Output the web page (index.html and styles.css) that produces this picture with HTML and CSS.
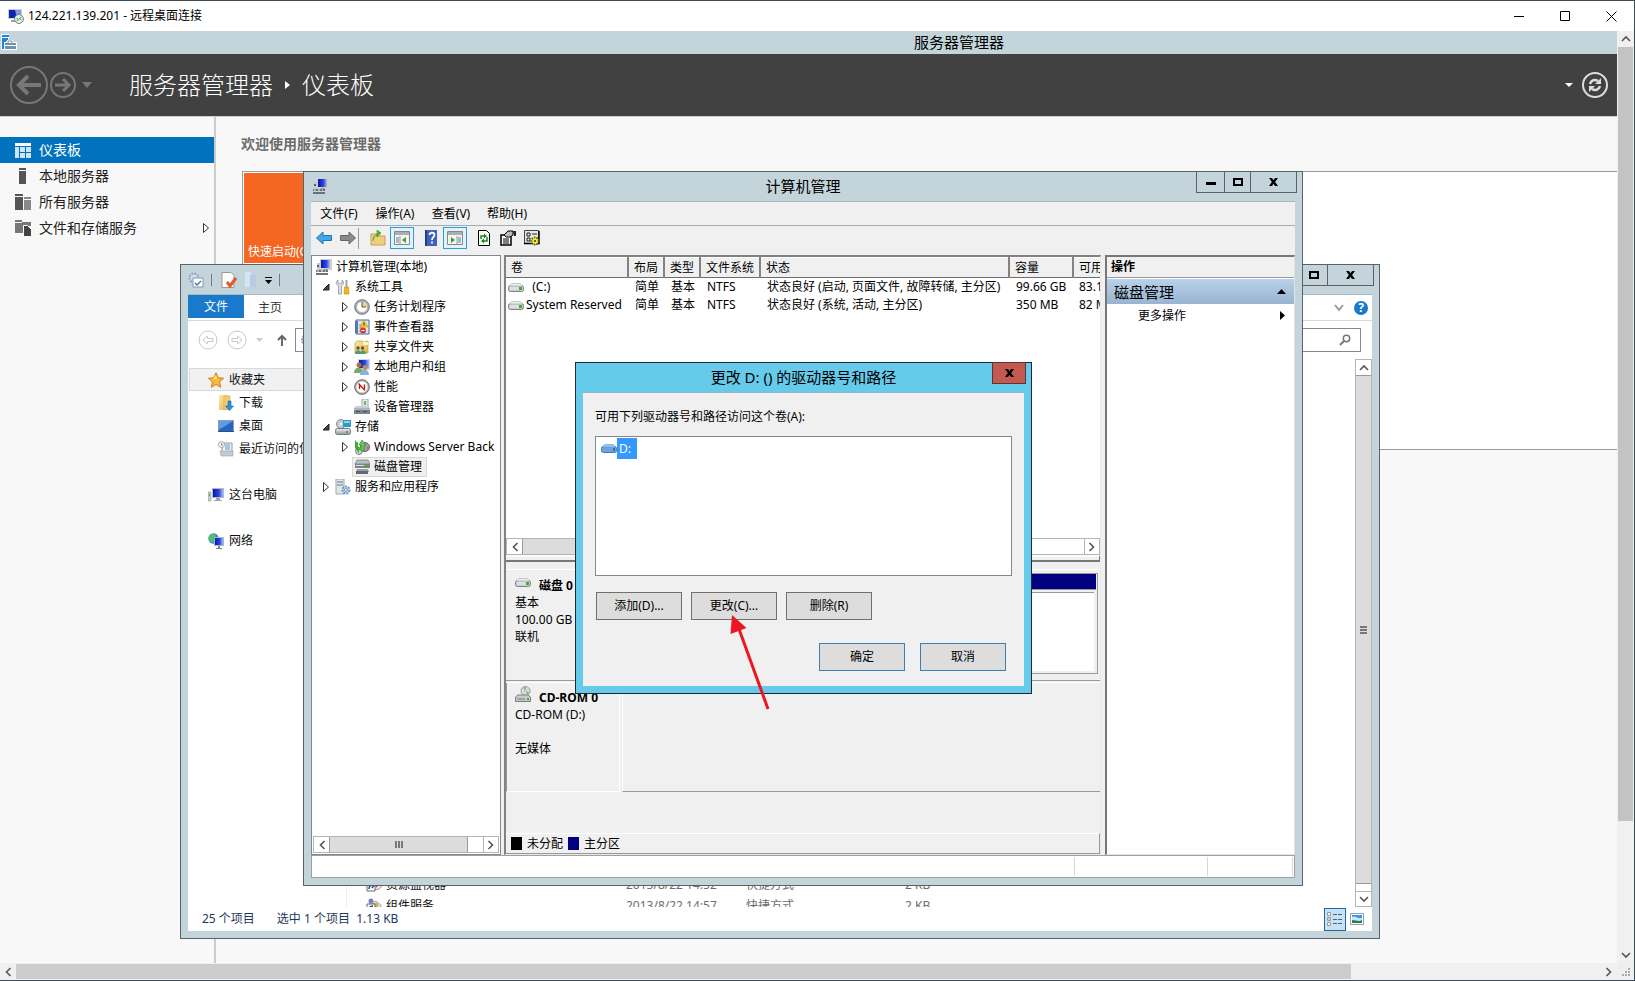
FILE: index.html
```html
<!DOCTYPE html>
<html lang="zh-CN">
<head>
<meta charset="utf-8">
<title>124.221.139.201 - 远程桌面连接</title>
<link rel="stylesheet" href="styles.css">
</head>
<body>
<svg class="defs" aria-hidden="true">
  <defs>
    <linearGradient id="g-screen" x1="0" y1="0" x2="1" y2="0"><stop offset="0" stop-color="#0a16a8"/><stop offset=".6" stop-color="#2b49dd"/><stop offset="1" stop-color="#a9bdf5"/></linearGradient>
    <linearGradient id="g-steel" x1="0" y1="0" x2="0" y2="1"><stop offset="0" stop-color="#f2f3f5"/><stop offset="1" stop-color="#8d939b"/></linearGradient>
    <linearGradient id="g-fold" x1="0" y1="0" x2="1" y2="1"><stop offset="0" stop-color="#fbe9a6"/><stop offset="1" stop-color="#e0b64a"/></linearGradient>
    <symbol id="i-comp" viewBox="0 0 16 16"><path d="M4 0h12v11H4z" fill="#d0cfc8"/><path d="M5 1h9v8H5z" fill="url(#g-screen)"/><path d="M8 10h4v2H8z" fill="#999"/><path d="M1 4h3v7H1z" fill="#c3c8cf"/><path d="M1 6h2v2H1z" fill="#5a636d"/><path d="M0 11h12v2H0zM0 14h12v2H0z" fill="#69737b"/><path d="M1 11h2v2H1zM5 11h2v2H5zM9 11h1v2H9z" fill="#aeb6bc"/></symbol>
    <symbol id="i-rdp" viewBox="0 0 16 16"><path d="M0 1h14v10H0z" fill="#c9d2da"/><path d="M1 2h12v8H1z" fill="#0a25b0"/><path d="M7 2h6v8H9z" fill="#7e9be8"/><path d="M3 12h7v2H3z" fill="#9aa4ad"/><circle cx="11" cy="11" r="4.500" fill="#e8efe8" stroke="#7b847e"/><path d="M8.500 10l2 1.500-2 1.500M13.500 9l-2 1.500 2 1.500" fill="none" stroke="#2f9a2f"/></symbol>
    <symbol id="i-srv" viewBox="0 0 16 16"><path d="M0 0h8v5H6v11H0z" fill="#fff"/><path d="M1 1h7v2H1zM1 4h6v3H5v8H1z" fill="#1c86d4"/><path d="M3 8h3V6h6v2h4v8H3z" fill="#fff"/><path d="M4 9h11v2H4zM4 12h11v3H4z" fill="#7391a5"/><path d="M7 9V7h4v2" fill="none" stroke="#7391a5"/></symbol>
    <symbol id="i-tools" viewBox="0 0 16 16"><path d="M3 1v3l2 1 2-1V1c3 2 1 5-.5 6v8h-3V7C1.500 6 0 3 3 1z" fill="#dde1e3" stroke="#8b9194" stroke-width=".8"/><path d="M10.500 1h2v7h-2z" fill="#9ea3a6"/><path d="M9.500 8h4l.5 7h-5z" fill="#f4b51d" stroke="#c38a08" stroke-width=".6"/></symbol>
    <symbol id="i-clock" viewBox="0 0 16 16"><circle cx="8" cy="8" r="7.300" fill="#b3b5b8" stroke="#707377"/><circle cx="8" cy="8" r="5.500" fill="#fff" stroke="#999" stroke-width=".6"/><path d="M8 8V3a5 5 0 0 1 5 5z" fill="#f6cf80"/><path d="M8 3v5h4" fill="none" stroke="#555"/></symbol>
    <symbol id="i-event" viewBox="0 0 16 16"><path d="M2 1h13v14H2z" fill="#dbe5f4" stroke="#4d6797"/><path d="M1 2h3v12H1z" fill="#5876a9"/><path d="M5 6h4M5 9h3M5 12h3" stroke="#7189b5"/><path d="M10 1l4 7H6z" fill="#f7d11c" stroke="#b38d00" stroke-width=".5"/><path d="M10 3.500v3" stroke="#333"/><circle cx="9" cy="11.500" r="3" fill="#d83a32"/><path d="M7.500 11.500h3" stroke="#fff"/></symbol>
    <symbol id="i-share" viewBox="0 0 16 16"><path d="M1 4l2-2h5l2 1 4-1v12H1z" fill="url(#g-fold)" stroke="#c59b3b" stroke-width=".7"/><path d="M9 3h5v3H9z" fill="#fff3cf"/><circle cx="4" cy="9" r="1.700" fill="#6b513b"/><circle cx="8.500" cy="9" r="1.700" fill="#6b513b"/><path d="M1 15c0-5 6-5 6 0z" fill="#4c9c7b"/><path d="M6 15c0-5 6-5 6 0z" fill="#4da06a"/></symbol>
    <symbol id="i-users" viewBox="0 0 16 16"><path d="M4 0h12v11H4z" fill="#d2d6dd"/><path d="M5 1h10v8H5z" fill="url(#g-screen)"/><circle cx="5" cy="6" r="2.500" fill="#a9703c"/><circle cx="11" cy="8.500" r="2.500" fill="#c08a5a"/><path d="M0 14c0-7 9-7 9 0z" fill="#7ba96d"/><path d="M6 16c0-7 9-7 9 0z" fill="#8cb1dd"/></symbol>
    <symbol id="i-perf" viewBox="0 0 16 16"><circle cx="8" cy="8" r="7.300" fill="#b5b5b5" stroke="#666"/><circle cx="8" cy="8" r="5.600" fill="#fff"/><path d="M5.500 10V5.500M10.500 10V5.500M4.500 4.500l6.500 7" stroke="#d01818" stroke-width="1.400" fill="none"/></symbol>
    <symbol id="i-dev" viewBox="0 0 16 16"><path d="M8 0h6v8H8z" fill="#e5e8eb" stroke="#9aa"/><path d="M10 2h2v4h-2z" fill="#75b34c"/><path d="M2 7h12l2 2H0z" fill="#c9ced3"/><path d="M0 9h16v6H0z" fill="#7b838b"/><path d="M0 9h16v2H0z" fill="#aeb5bb"/><path d="M2 12h4v1H2zM9 12h4v1H9z" fill="#4a5157"/></symbol>
    <symbol id="i-stor" viewBox="0 0 16 16"><circle cx="6" cy="5" r="4.500" fill="#c4ccd0" stroke="#889095"/><circle cx="6" cy="5" r="1.300" fill="#fff"/><path d="M8 1h8v7H8z" fill="#2f9cc7"/><path d="M9 2h6v2H9z" fill="#8bd1ea"/><rect x=".5" y="9.500" width="15" height="6" rx="2" fill="url(#g-steel)" stroke="#737b82"/><path d="M11 12h2v2h-2z" fill="#3fae2c"/></symbol>
    <symbol id="i-back" viewBox="0 0 16 16"><circle cx="11" cy="8" r="4.500" fill="#9aa0a6" stroke="#666"/><circle cx="5" cy="12" r="3.500" fill="#c8ccd0" stroke="#888"/><path d="M1 1l3 3v3l3 4H5v3L1 9z" fill="#3cad2f"/><path d="M8 1l4 5h-2v6H7V6H5z" fill="#69c958" stroke="#28841f" stroke-width=".6"/><path d="M13 8l2 3" stroke="#c56c6c" stroke-width="2"/></symbol>
    <symbol id="i-disk" viewBox="0 0 16 16"><path d="M3 1h11l2 4H1z" fill="#babfc3" stroke="#70777c" stroke-width=".7"/><path d="M1 5h15v4H1z" fill="#7d8488"/><path d="M2 6h8v1H2z" fill="#dfe3e5"/><path d="M12 6h2v2h-2z" fill="#45b52a"/><path d="M3 10h11l1 3H2z" fill="#989ea2"/><path d="M2 12h12v3H2z" fill="#62696e"/></symbol>
    <symbol id="i-svc" viewBox="0 0 16 16"><path d="M1 0h8v15H1z" fill="#dfe6ea" stroke="#9ba8ae"/><path d="M2 3h6M2 6h6" stroke="#667a84"/><circle cx="11" cy="11" r="3.500" fill="#cfe1f3" stroke="#6795c4" stroke-width="2" stroke-dasharray="2 1"/><circle cx="11" cy="11" r="1.500" fill="#fff" stroke="#6795c4"/></symbol>
    <symbol id="i-drive" viewBox="0 0 16 9"><rect x=".5" y="2.500" width="15" height="6" rx="2" fill="#c9ccd0" stroke="#7f8387"/><path d="M4 .5h8l3 2.500H1z" fill="#eceeef" stroke="#a5a8ab" stroke-width=".6"/><path d="M2 4h9v3H2z" fill="#dcdee1"/><path d="M11 4h3v3h-3z" fill="#3eae26"/></symbol>
    <symbol id="i-drive-sel" viewBox="0 0 16 9"><rect x=".5" y="2.500" width="15" height="6" rx="2" fill="#70a5db" stroke="#3f78b5"/><path d="M4 .5h8l3 2.500H1z" fill="#9fc6ef" stroke="#5a93cc" stroke-width=".6"/><path d="M12 4h2v3h-2z" fill="#2c7b87"/></symbol>
    <symbol id="i-cd" viewBox="0 0 16 16"><circle cx="10.500" cy="5" r="4.500" fill="#dadfd9" stroke="#98a09a"/><path d="M10.500 5L8 1.500 11 .8zM10.500 5l4 2-2 2z" fill="#7dbb70"/><circle cx="10.500" cy="5" r="1.200" fill="#fff" stroke="#a17fa0" stroke-width=".6"/><path d="M3 9h10l2.500 2v4.500H.5V11z" fill="#c8cbcd" stroke="#7c8083"/><path d="M2 13h8" stroke="#777"/><path d="M12 12h2v2h-2z" fill="#3eae26"/></symbol>
    <symbol id="i-star" viewBox="0 0 16 16"><path d="M8 .8l2.200 5 5.300.5-4 3.600 1.200 5.300L8 12.400l-4.700 2.800 1.200-5.300-4-3.600 5.300-.5z" fill="#fbb93a" stroke="#d57a12"/><path d="M8 3l1 4-4 0z" fill="#ffe49a"/></symbol>
    <symbol id="i-down" viewBox="0 0 16 16"><path d="M1 0h9v15H1z" fill="url(#g-fold)"/><path d="M6 1h6v14l-6-1z" fill="#f0cf6c" stroke="#cfa341" stroke-width=".5"/><path d="M10 6h3v5h2.500l-4 4.500-4-4.500H10z" fill="#2c8fe0" stroke="#1a62a8" stroke-width=".6"/></symbol>
    <symbol id="i-desk" viewBox="0 0 16 16"><path d="M0 2h16v12H0z" fill="#8aa0b8"/><path d="M1 3h14v10H1z" fill="#2465c0"/><path d="M1 3h14L4 10l-3 1z" fill="#5d9be3"/><path d="M0 13h16v1H0z" fill="#37506e"/></symbol>
    <symbol id="i-recent" viewBox="0 0 16 16"><path d="M4 2h10v9H4z" fill="#eef3f8" stroke="#8f989f"/><path d="M7 4h5M7 6h5M7 8h5" stroke="#5c97cc"/><circle cx="3.500" cy="3.500" r="3" fill="#f6f8fa" stroke="#8c959c" stroke-width=".8"/><path d="M3.500 2v2H5" stroke="#555" fill="none" stroke-width=".7"/><path d="M2 10h13v5H3z" fill="#c5cbd0" stroke="#9aa1a7" stroke-width=".6"/></symbol>
    <symbol id="i-pc" viewBox="0 0 16 16"><path d="M4 1h12v10H4z" fill="#b6bcc3"/><path d="M5 2h10v8H5z" fill="url(#g-screen)"/><path d="M8 11h4v2h2v1H6v-1h2z" fill="#9da5ac"/><path d="M0 5h3v9H0z" fill="#c6cacd" stroke="#858c92" stroke-width=".5"/><path d="M1 7h1v2H1z" fill="#58a848"/></symbol>
    <symbol id="i-net" viewBox="0 0 16 16"><circle cx="5.500" cy="5.500" r="5.200" fill="#2f86dd"/><path d="M2 2c3-2 5-1 6 1L5 5l1 3-2 2C1 8 0 5 2 2z" fill="#5bc05a"/><path d="M6 4h10v9H6z" fill="#a9bad0"/><path d="M7 5h8v7H7z" fill="url(#g-screen)"/><path d="M10 13h2v2h2v1H8v-1h2z" fill="#7d858c"/></symbol>
    <symbol id="i-link" viewBox="0 0 16 16"><circle cx="11" cy="8" r="4.500" fill="#f3e6e6" stroke="#999"/><path d="M10 10l3-4" stroke="#c33" stroke-width="1.500"/><path d="M1 5h8v9H1z" fill="#fff" stroke="#666"/><path d="M3 12c0-3 1-4 4-4M5 6l3 2-2 3" fill="none" stroke="#1c48a0" stroke-width="1.500"/></symbol>
    <symbol id="i-comsvc" viewBox="0 0 16 16"><circle cx="5" cy="3" r="2.500" fill="#6f7fd0"/><path d="M3 6l7-3 5 4v6H3z" fill="#d5dbe0" stroke="#888" stroke-width=".6"/><path d="M5 5h7v5H5z" fill="#d9b23c"/><path d="M1 6h8v9H1z" fill="#fff" stroke="#666"/><path d="M3 12c0-3 1-4 4-4" fill="none" stroke="#1c48a0" stroke-width="1.500"/><path d="M12 9h3v3h-3z" fill="#56b04c"/></symbol>
    <symbol id="i-x" viewBox="0 0 9 8"><path d="M0 0h3l1.500 2.300L6 0h3L6.100 4 9 8H6L4.500 5.700 3 8H0l2.900-4z" fill="#000"/></symbol>
    <symbol id="i-left" viewBox="0 0 8 10"><path d="M6.500 1l-4 4 4 4" fill="none" stroke="#555" stroke-width="1.600"/></symbol>
    <symbol id="i-right" viewBox="0 0 8 10"><path d="M1.500 1l4 4-4 4" fill="none" stroke="#555" stroke-width="1.600"/></symbol>
    <symbol id="i-up" viewBox="0 0 10 8"><path d="M1 6l4-4 4 4" fill="none" stroke="#555" stroke-width="1.600"/></symbol>
    <symbol id="i-dn" viewBox="0 0 10 8"><path d="M1 2l4 4 4-4" fill="none" stroke="#555" stroke-width="1.600"/></symbol>
    <symbol id="i-shut" viewBox="0 0 8 10"><path d="M1.500 .5v9L6.500 5z" fill="#fff" stroke="#333"/></symbol>
    <symbol id="i-open" viewBox="0 0 8 8"><path d="M7 1v6H1z" fill="#444" stroke="#222"/></symbol>
  </defs>
</svg>

<header class="rdp-bar">
  <svg class="ic"><use href="#i-rdp"/></svg>
  <span class="rdp-name">124.221.139.201 - 远程桌面连接</span>
  <button class="rdp-btn" aria-label="最小化"><svg width="11" height="11"><path d="M0 5.500h10" stroke="#000"/></svg></button>
  <button class="rdp-btn" aria-label="最大化"><svg width="11" height="11"><path d="M.5 .5h9v9h-9z" fill="none" stroke="#000"/></svg></button>
  <button class="rdp-btn" aria-label="关闭"><svg width="11" height="11"><path d="M.5 .5l10 10M10.500 .5l-10 10" stroke="#000"/></svg></button>
</header>

<div class="stage">
  <main class="remote">
    <div class="sm-title"><svg class="ic"><use href="#i-srv"/></svg><span>服务器管理器</span></div>
    <div class="sm-head">
      <button class="bare" aria-label="后退"><svg width="38" height="38"><circle cx="19" cy="19" r="18" fill="none" stroke="#777" stroke-width="2"/><path d="M31 19H9M18 10l-9 9 9 9" fill="none" stroke="#777" stroke-width="4"/></svg></button>
      <button class="bare" aria-label="前进"><svg width="26" height="26"><circle cx="13" cy="13" r="12" fill="none" stroke="#777" stroke-width="2"/><path d="M5 13h14M13 7l6 6-6 6" fill="none" stroke="#777" stroke-width="3"/></svg></button>
      <svg class="sm-drop" width="10" height="6"><path d="M0 0h10L5 6z" fill="#777"/></svg>
      <h1 class="crumb"><span>服务器管理器</span><svg width="5" height="8"><path d="M0 0l5 4-5 4z" fill="#fff"/></svg><span>仪表板</span></h1>
      <svg width="8" height="4"><path d="M0 0h8L4 4z" fill="#fff"/></svg>
      <button class="bare refresh" aria-label="刷新"><svg width="26" height="26"><circle cx="13" cy="13" r="12" fill="none" stroke="#ddd" stroke-width="2"/><path d="M8 12c1-4 5-5 8-3M18 14c-1 4-5 5-8 3" fill="none" stroke="#ddd" stroke-width="2.500"/><path d="M19 6v6h-6zM7 20v-6h6z" fill="#ddd"/></svg></button>
    </div>
    <div class="sm-body">
      <nav class="sm-nav">
        <a href="#" class="on"><svg width="16" height="16"><path d="M0 1h16v3H0z" fill="#fff"/><path d="M0 5h4v11H0zM5 5h5v5H5zM11 5h5v5h-5zM5 11h5v5H5zM11 11h5v5h-5z" fill="#cfe5f5"/></svg><span>仪表板</span></a>
        <a href="#"><svg width="16" height="16"><path d="M4 0h7v2H4zM4 3h7v13H4z" fill="#555"/></svg><span>本地服务器</span></a>
        <a href="#"><svg width="16" height="16"><path d="M0 0h8v2H0zM0 3h8v13H0z" fill="#555"/><path d="M9 3h7v2H9zM9 6h7v10H9z" fill="#888"/></svg><span>所有服务器</span></a>
        <a href="#"><svg width="16" height="16"><path d="M0 0h7v2h9v4H9v7H0z" fill="#777"/><path d="M0 2h7v1H0z" fill="#f8f8f8"/><path d="M8.500 5.500h4l4 4v7h-8z" fill="#444" stroke="#fff"/></svg><span>文件和存储服务</span><svg class="more" width="8" height="10"><use href="#i-shut"/></svg></a>
      </nav>
      <section class="sm-main">
        <h2>欢迎使用服务器管理器</h2>
        <div class="welcome"><div class="quick">快速启动(Q)</div></div>
      </section>
    </div>

    <section class="win explorer">
      <div class="caption">
        <div class="qat"><svg class="ic" viewBox="0 0 16 16"><circle cx="6" cy="6" r="4.500" fill="#cfdde8" stroke="#8ea6b9" stroke-width="2" stroke-dasharray="2 1"/><path d="M5 6h10v9H5z" fill="#fff" stroke="#8b97a1"/><path d="M7 11l2 2 4-4" fill="none" stroke="#2b84c4" stroke-width="1.500"/></svg><i></i><svg class="ic" viewBox="0 0 16 16"><path d="M1 .5h9l3 3v12H1z" fill="#fff" stroke="#999"/><path d="M6 10l3 4 6-8" fill="none" stroke="#e2592b" stroke-width="3"/></svg><svg class="ic" viewBox="0 0 16 16"><path d="M2 0h6v15H2z" fill="#d7e2f2"/><path d="M7 3h6v12H7z" fill="#b8cae4"/></svg><svg width="7" height="7"><path d="M0 0h7v1H0zM0 3h7L3.500 7z" fill="#000"/></svg><i></i></div>
        <div class="cap-btns"><button aria-label="最大化"><svg width="10" height="8"><path d="M1 1h8v6H1z" fill="none" stroke="#000" stroke-width="2"/></svg></button><button class="wide" aria-label="关闭"><svg width="9" height="8"><use href="#i-x"/></svg></button></div>
      </div>
      <div class="client">
        <div class="tabs"><button class="file">文件</button><button class="tab">主页</button><span class="grow"></span><svg width="10" height="8"><path d="M1 1l4 5 4-5" fill="none" stroke="#999" stroke-width="2"/></svg><button class="help" aria-label="帮助">?</button></div>
        <div class="addr">
          <svg width="20" height="20"><circle cx="10" cy="10" r="9" fill="none" stroke="#c9c9c9"/><path d="M5 10l4.500-4v2.500H15v3H9.500V14z" fill="none" stroke="#c9c9c9"/></svg>
          <svg width="20" height="20"><circle cx="10" cy="10" r="9" fill="none" stroke="#c9c9c9"/><path d="M15 10l-4.500-4v2.500H5v3h5.500V14z" fill="none" stroke="#c9c9c9"/></svg>
          <svg width="7" height="4"><path d="M0 0h7L3.500 4z" fill="#ccc"/></svg>
          <svg class="upper" width="10" height="12"><path d="M5 12V2M1 6l4-4 4 4" fill="none" stroke="#666" stroke-width="2"/></svg>
          <label class="path"><svg class="ic" viewBox="0 0 16 16"><circle cx="8" cy="8" r="5" fill="#cfdde8" stroke="#8ea6b9" stroke-width="2" stroke-dasharray="2 1"/></svg><input aria-label="地址"></label>
          <label class="search"><input aria-label="搜索"><svg width="12" height="12"><circle cx="7.500" cy="4.500" r="3.200" fill="none" stroke="#777" stroke-width="1.500"/><path d="M5 7l-4 4" stroke="#777" stroke-width="2"/></svg></label>
        </div>
        <div class="ex-body">
          <nav class="ex-nav">
            <a href="#" class="top hot"><svg class="ic"><use href="#i-star"/></svg>收藏夹</a>
            <a href="#"><svg class="ic"><use href="#i-down"/></svg>下载</a>
            <a href="#"><svg class="ic"><use href="#i-desk"/></svg>桌面</a>
            <a href="#"><svg class="ic"><use href="#i-recent"/></svg>最近访问的位置</a>
            <a href="#" class="top gap"><svg class="ic"><use href="#i-pc"/></svg>这台电脑</a>
            <a href="#" class="top gap"><svg class="ic"><use href="#i-net"/></svg>网络</a>
          </nav>
          <div class="ex-list">
            <div class="row"><span><svg class="ic"><use href="#i-link"/></svg>资源监视器</span><span>2013/8/22 14:52</span><span>快捷方式</span><span class="size">2 KB</span></div>
            <div class="row"><span><svg class="ic"><use href="#i-comsvc"/></svg>组件服务</span><span>2013/8/22 14:57</span><span>快捷方式</span><span class="size">2 KB</span></div>
          </div>
          <div class="vbar"><button aria-label="向上"><svg width="10" height="8"><use href="#i-up"/></svg></button><div class="thumb"><b></b><b></b><b></b></div><button aria-label="向下"><svg width="10" height="8"><use href="#i-dn"/></svg></button></div>
        </div>
        <footer class="ex-status"><span>25 个项目</span><span>选中 1 个项目&nbsp; 1.13 KB</span><span class="grow"></span>
          <button class="view on" aria-label="详细信息"><svg width="16" height="14"><path d="M.5 .5h3v3h-3zM.5 5.500h3v3h-3zM.5 10.500h3v3h-3z" fill="#fff" stroke="#999"/><path d="M6 2.500h10M6 7.500h10M6 11.500h10" stroke="#47617d" stroke-dasharray="4 1"/><path d="M1.500 6.500h1v1h-1z" fill="#c00"/></svg></button>
          <button class="view" aria-label="大图标"><svg width="14" height="12"><path d="M.5 .5h13v11H.5z" fill="#fff" stroke="#8aa0b8"/><path d="M2 2h10v8H2z" fill="#3b98d8"/><path d="M2 4c3-2 5 2 10 1v3H2z" fill="#c5e6f6"/><path d="M2 7c4 0 7 2 10 0v3H2z" fill="#2d7a55"/></svg></button>
        </footer>
      </div>
    </section>

    <section class="win mmc">
      <div class="caption">
        <svg class="ic"><use href="#i-comp"/></svg><h3>计算机管理</h3>
        <div class="cap-btns"><button class="min" aria-label="最小化"><svg width="10" height="8"><path d="M0 4h10v3H0z"/></svg></button><button aria-label="最大化"><svg width="10" height="8"><path d="M1 1h8v6H1z" fill="none" stroke="#000" stroke-width="2"/></svg></button><button class="wide" aria-label="关闭"><svg width="9" height="8"><use href="#i-x"/></svg></button></div>
      </div>
      <div class="client">
        <div class="menu"><button>文件(F)</button><button>操作(A)</button><button>查看(V)</button><button>帮助(H)</button></div>
        <div class="tools">
          <button aria-label="后退"><svg class="ic" viewBox="0 0 16 16"><path d="M.5 8L7 2v3.500h8.500v5H7V14z" fill="#3fa9e8" stroke="#2474ab"/></svg></button>
          <button aria-label="前进"><svg class="ic" viewBox="0 0 16 16"><path d="M15.500 8L9 2v3.500H.5v5H9V14z" fill="#8a8a8a" stroke="#666"/></svg></button>
          <i></i>
          <button aria-label="上移"><svg class="ic" viewBox="0 0 16 16"><path d="M1 4h5l1 2h8v9H1z" fill="#f0cf7a" stroke="#c8a14a"/><path d="M3 11c0-4 2-6 4-6V7l4-4-4-3v2" fill="#46b832" stroke="#2f8f22" stroke-width=".6"/></svg></button>
          <button class="sel" aria-label="显示控制台树"><svg class="ic" viewBox="0 0 16 16"><path d="M.5 1.500h15v13H.5z" fill="#f4f4f4" stroke="#808890"/><path d="M1 2h14v3H1z" fill="#a8afb6"/><path d="M6 6v8" stroke="#999"/><path d="M2 8h3M2 10h3M2 12h3" stroke="#5c7ea0"/><path d="M12 7v6L8 10z" fill="#3aa52d"/></svg></button>
          <span></span>
          <button aria-label="帮助"><svg class="ic" viewBox="0 0 16 16"><path d="M2 0h12v16H2z" fill="#3f62bd"/><path d="M2 0h2v16H2z" fill="#243f8a"/><path d="M6.500 5c0-3 5-3 5 0 0 2-2.500 2-2.500 5M9 11.500v2" fill="none" stroke="#fff" stroke-width="1.800"/></svg></button>
          <button class="sel" aria-label="显示操作窗格"><svg class="ic" viewBox="0 0 16 16"><path d="M.5 1.500h15v13H.5z" fill="#f4f4f4" stroke="#808890"/><path d="M1 2h14v3H1z" fill="#a8afb6"/><path d="M10 6v8" stroke="#999"/><path d="M11 8h3M11 10h3M11 12h3" stroke="#5c7ea0"/><path d="M4 7v6l4-3z" fill="#3aa52d"/></svg></button>
          <span></span>
          <button aria-label="刷新"><svg class="ic" viewBox="0 0 16 16"><path d="M2.500 .5h8l3 3v12h-11z" fill="#fff" stroke="#000"/><path d="M5 9V6h4M11 7v4H7" fill="none" stroke="#138a13" stroke-width="1.500"/><path d="M8 3.500L11 6 8 8.500zM8 8.500v5L5 11z" fill="#138a13"/></svg></button>
          <button aria-label="属性"><svg class="ic" viewBox="0 0 16 16"><path d="M1 5h10v10H1z" fill="#fff" stroke="#000" stroke-width="1.500"/><path d="M3 9h6M3 11h6M3 13h6" stroke="#000"/><path d="M4 5l4-4h5v4l-3 2H6z" fill="#bbb" stroke="#000"/><path d="M13 1h3v5h-2z" fill="#223"/></svg></button>
          <button aria-label="设置"><svg class="ic" viewBox="0 0 16 16"><path d="M.5 .5h14v13H.5z" fill="#e6e6e6" stroke="#444"/><path d="M0 13.500h15V1" fill="none" stroke="#000" stroke-width="1.500"/><path d="M3 3h3v3H3zM3 8h3v3H3z" fill="none" stroke="#222"/><path d="M8 4h5" stroke="#222"/><circle cx="11" cy="11" r="3.500" fill="#ff0" stroke="#553" stroke-width="2" stroke-dasharray="1.500 1"/><circle cx="11" cy="11" r="2.500" fill="#fe2"/><circle cx="11" cy="11" r="1" fill="#333"/></svg></button>
        </div>
        <div class="panes">
          <div class="tree">
            <ul>
              <li><svg class="ic"><use href="#i-comp"/></svg>计算机管理(本地)</li>
              <li class="l1"><svg class="tw"><use href="#i-open"/></svg><svg class="ic"><use href="#i-tools"/></svg>系统工具</li>
              <li class="l2"><svg class="tw"><use href="#i-shut"/></svg><svg class="ic"><use href="#i-clock"/></svg>任务计划程序</li>
              <li class="l2"><svg class="tw"><use href="#i-shut"/></svg><svg class="ic"><use href="#i-event"/></svg>事件查看器</li>
              <li class="l2"><svg class="tw"><use href="#i-shut"/></svg><svg class="ic"><use href="#i-share"/></svg>共享文件夹</li>
              <li class="l2"><svg class="tw"><use href="#i-shut"/></svg><svg class="ic"><use href="#i-users"/></svg>本地用户和组</li>
              <li class="l2"><svg class="tw"><use href="#i-shut"/></svg><svg class="ic"><use href="#i-perf"/></svg>性能</li>
              <li class="l2"><svg class="tw"></svg><svg class="ic"><use href="#i-dev"/></svg>设备管理器</li>
              <li class="l1"><svg class="tw"><use href="#i-open"/></svg><svg class="ic"><use href="#i-stor"/></svg>存储</li>
              <li class="l2"><svg class="tw"><use href="#i-shut"/></svg><svg class="ic"><use href="#i-back"/></svg>Windows Server Back</li>
              <li class="l2"><svg class="tw"></svg><span class="picked"><svg class="ic"><use href="#i-disk"/></svg>磁盘管理</span></li>
              <li class="l1"><svg class="tw"><use href="#i-shut"/></svg><svg class="ic"><use href="#i-svc"/></svg>服务和应用程序</li>
            </ul>
            <div class="hbar"><button aria-label="向左"><svg width="8" height="10"><use href="#i-left"/></svg></button><div class="thumb"><b></b><b></b><b></b></div><button aria-label="向右"><svg width="8" height="10"><use href="#i-right"/></svg></button></div>
          </div>

          <div class="mid">
            <div class="vols">
              <table>
                <colgroup><col class="c-vol"><col class="c-s"><col class="c-s"><col class="c-fs"><col class="c-st"><col class="c-cap"><col class="c-free"></colgroup>
                <thead><tr><th>卷</th><th>布局</th><th>类型</th><th>文件系统</th><th>状态</th><th>容量</th><th>可用</th></tr></thead>
                <tbody>
                  <tr><td><svg class="dr"><use href="#i-drive"/></svg>&nbsp; (C:)</td><td>简单</td><td>基本</td><td>NTFS</td><td>状态良好 (启动, 页面文件, 故障转储, 主分区)</td><td>99.66 GB</td><td>83.1</td></tr>
                  <tr><td><svg class="dr"><use href="#i-drive"/></svg>System Reserved</td><td>简单</td><td>基本</td><td>NTFS</td><td>状态良好 (系统, 活动, 主分区)</td><td>350 MB</td><td>82 M</td></tr>
                </tbody>
              </table>
            </div>
            <div class="hbar"><button aria-label="向左"><svg width="8" height="10"><use href="#i-left"/></svg></button><div class="thumb"></div><button aria-label="向右"><svg width="8" height="10"><use href="#i-right"/></svg></button></div>
            <div class="split"></div>
            <div class="disks">
              <div class="disk first">
                <div class="info"><div class="dname"><svg class="dr"><use href="#i-drive"/></svg><strong>磁盘 0</strong></div><div>基本</div><div>100.00 GB</div><div>联机</div></div>
                <div class="graph"><div class="part"><div class="strip"></div><div class="box"></div></div></div>
              </div>
              <div class="disk second">
                <div class="info"><div class="dname"><svg class="ic"><use href="#i-cd"/></svg><strong>CD-ROM 0</strong></div><div>CD-ROM (D:)</div><div>&nbsp;</div><div>无媒体</div></div>
                <div class="graph"></div>
              </div>
            </div>
            <div class="legend"><b></b>未分配<b class="navy"></b>主分区</div>
          </div>

          <div class="acts">
            <div class="a-head">操作</div>
            <button class="a-group">磁盘管理<svg width="9" height="5"><path d="M4.500 0L9 5H0z"/></svg></button>
            <button class="a-item">更多操作<svg width="5" height="9"><path d="M0 0l5 4.500L0 9z"/></svg></button>
          </div>
        </div>
        <footer class="mmc-status"><span></span><span></span><span></span></footer>
      </div>
    </section>

    <section class="win dialog" role="dialog" aria-labelledby="dlg-title">
      <div class="caption"><h3 id="dlg-title">更改 D: () 的驱动器号和路径</h3><button class="close" aria-label="关闭"><svg width="9" height="8"><use href="#i-x"/></svg></button></div>
      <div class="dlg-body">
        <p id="dlg-label">可用下列驱动器号和路径访问这个卷(A):</p>
        <div class="paths" role="listbox" aria-labelledby="dlg-label"><div class="path-item" role="option" aria-selected="true"><svg class="dr"><use href="#i-drive-sel"/></svg><span>D:</span></div></div>
        <div class="edit-row"><button>添加(D)...</button><button>更改(C)...</button><button>删除(R)</button></div>
        <div class="ok-row"><button>确定</button><button>取消</button></div>
      </div>
    </section>

    <svg class="pointer" width="44" height="98"><path d="M37 94L8 14" stroke="#ec1620" stroke-width="3"/><path d="M1 0l14.500 13L-.5 19z" fill="#ec1620"/></svg>
  </main>

  <div class="out-v"><button aria-label="向上"><svg width="10" height="8"><use href="#i-up"/></svg></button><div class="track"><div class="thumb"></div></div><button aria-label="向下"><svg width="10" height="8"><use href="#i-dn"/></svg></button></div>
  <div class="out-h"><button aria-label="向左"><svg width="8" height="10"><use href="#i-left"/></svg></button><div class="track"><div class="thumb"></div></div><button aria-label="向右"><svg width="8" height="10"><use href="#i-right"/></svg></button></div>
  <div class="grip"><svg width="9" height="9"><path d="M6 0h2v2H6zM3 3h2v2H3zM6 3h2v2H6zM0 6h2v2H0zM3 6h2v2H3zM6 6h2v2H6z" fill="#aaa"/></svg></div>
</div>
</body>
</html>
```
FILE: styles.css
```css
* { box-sizing: border-box; }
html, body { height: 100%; }
body {
  margin: 0;
  display: flex;
  flex-direction: column;
  overflow: hidden;
  border: 1px solid #3f4c58;
  border-left: 0;
  background: #fff;
  color: #000;
  font: 12px/16px "Noto Sans", "Noto Sans CJK SC", sans-serif;
}
button, input { font: inherit; color: inherit; margin: 0; padding: 0; border: 0; background: none; border-radius: 0; }
h1, h2, h3, p, ul { margin: 0; padding: 0; font-weight: normal; }
ul { list-style: none; }
a { color: inherit; text-decoration: none; }
svg { display: block; flex: none; }
.defs { position: absolute; width: 0; height: 0; }
.ic { width: 16px; height: 16px; }
.dr { width: 16px; height: 9px; }
.grow { flex: 1; }
.bare { display: block; }

/* Remote desktop frame */
.rdp-bar { display: flex; align-items: center; height: 30px; padding-left: 8px; flex: none; }
.rdp-name { flex: 1; padding-left: 4px; }
.rdp-btn { width: 46px; height: 29px; display: grid; place-items: center; }
.stage { flex: 1; min-height: 0; display: grid; grid-template-columns: minmax(0, 1fr) 17px; grid-template-rows: minmax(0, 1fr) 17px; background: #efefef; }
.remote { position: relative; overflow: hidden; display: flex; flex-direction: column; background: #f8f8f8; }
.out-v, .out-h { display: flex; background: #f0f0f0; }
.out-v { flex-direction: column; padding: 0 1px; }
.out-h { padding: 1px 0; }
.out-v button, .out-h button { width: 16px; height: 16px; display: grid; place-items: center; flex: none; }
.track { flex: 1; min-width: 0; min-height: 0; }
.out-v .thumb { height: 86%; background: #c3c3c3; }
.out-h .thumb { width: 84.2%; height: 100%; background: #ccc; }
.grip { display: grid; place-items: end; padding: 3px; }

/* Server manager */
.sm-title { display: flex; align-items: center; height: 23px; background: #c3d5db; font-size: 15px; flex: none; padding: 0 0 2px 1px; }
.sm-title span { flex: 1; text-align: center; padding-left: 284px; }
.sm-head { display: flex; align-items: center; height: 62px; flex: none; padding: 0 9px 0 10px; background: #414141; color: #fff; }
.sm-head .bare + .bare { margin-left: 2px; }
.sm-drop { margin-left: 6px; }
.crumb { flex: 1; display: flex; align-items: center; gap: 12px; padding-left: 37px; font-size: 24px; line-height: 32px; font-weight: 300; }
.refresh { margin-left: 9px; }
.sm-body { flex: 1; display: flex; min-height: 0; border-top: 1px solid #ccc; }
.sm-nav { width: 216px; border-right: 2px solid #ccc; padding-top: 20px; flex: none; }
.sm-nav a { display: flex; align-items: center; height: 26px; padding-left: 15px; gap: 8px; font-size: 14px; color: #222; }
.sm-nav .on { background: #0072be; color: #fff; }
.sm-nav .more { margin: 0 4px 0 auto; }
.sm-main { flex: 1; min-width: 0; padding: 17px 0 0 25px; }
.sm-main h2 { font-size: 14px; line-height: 20px; font-weight: bold; color: #6b6b6b; }
.welcome { height: 279px; margin: 17px 0 0 1px; padding: 1px; border: 1px solid #999; border-right: 0; background: #fff; }
.quick { width: 200px; height: 90px; padding: 71px 4px 0; background: #f46622; color: #fff; }

/* Shared window chrome */
.win { position: absolute; display: flex; flex-direction: column; border: 1px solid #5c6068; background: #c3d5db; padding: 0 7px 7px; }
.caption { display: flex; align-items: flex-start; height: 29px; flex: none; position: relative; }
.caption h3 { position: absolute; inset: 0; text-align: center; font-size: 15px; line-height: 28px; pointer-events: none; }
.cap-btns { display: flex; margin: -1px -2px 0 auto; border: 1px solid #5c6068; }
.cap-btns button { width: 26px; height: 20px; display: grid; place-items: center; border-left: 1px solid #5c6068; }
.cap-btns button:first-child { border-left: 0; }
.cap-btns .min { width: 27px; }
.cap-btns .wide { width: 46px; }
.client { flex: 1; min-height: 0; display: flex; flex-direction: column; border-top: 1px solid #a9b8bf; background: #fff; }

/* Scroll bars inside windows */
.hbar, .vbar { display: flex; flex: none; border: 1px solid #b5b5b5; background: #fff; }
.hbar { height: 17px; }
.vbar { width: 17px; flex-direction: column; }
.hbar button, .vbar button { width: 15px; height: 15px; display: grid; place-items: center; flex: none; }
.thumb b { background: #777; }
.hbar .thumb { display: flex; justify-content: center; align-items: center; gap: 1px; background: #dcdcdc; border: solid #999; border-width: 0 1px; margin-right: auto; }
.hbar b { width: 2px; height: 7px; }
.hbar button:last-child { border-left: 1px solid #b5b5b5; }
.vbar .thumb { flex: 1; display: flex; flex-direction: column; justify-content: center; align-items: center; gap: 1px; background: #dcdcdc; border: solid #999; border-width: 1px 0; margin-bottom: 7px; }
.vbar b { width: 7px; height: 2px; }
.vbar button:last-child { border-top: 1px solid #b5b5b5; }

/* File explorer */
.explorer { left: 180px; top: 233px; width: 1200px; height: 675px; }
.qat { display: flex; align-items: center; gap: 6px; padding: 7px 0 0; }
.qat i { width: 1px; height: 12px; margin: 0 3px 0 1px; background: #777; }
.tabs { display: flex; align-items: center; height: 26px; border-bottom: 1px solid #dadada; flex: none; padding-right: 4px; }
.tabs .file { width: 56px; height: 23px; align-self: flex-start; background: #1979ca; color: #fff; }
.tabs .tab { width: 52px; color: #333; }
.tabs .help { width: 14px; height: 14px; margin-left: 10px; border-radius: 7px; background: #1979ca; color: #fff; font-weight: bold; line-height: 14px; }
.addr { display: flex; align-items: center; height: 38px; padding: 0 11px 0 10px; flex: none; }
.addr > svg + svg { margin-left: 9px; }
.addr .upper { margin: 0 8px 0 14px; }
.path, .search { display: flex; align-items: center; height: 24px; border: 1px solid #888; background: #fff; }
.path { flex: 1; margin-right: 10px; padding-left: 3px; }
.search { width: 230px; padding-right: 9px; }
.path input, .search input { flex: 1; min-width: 0; }
.ex-body { flex: 1; min-height: 0; display: flex; }
.ex-nav { width: 159px; padding: 9px 0 0 1px; border-right: 1px solid #eee; overflow: hidden; flex: none; }
.ex-nav a { display: flex; align-items: center; gap: 5px; height: 23px; padding-left: 29px; white-space: nowrap; color: #111; }
.ex-nav .top { padding-left: 19px; }
.ex-nav .hot { background: #f1f1f1; border: 1px solid #d9d9d9; padding-left: 18px; }
.ex-nav .gap { margin-top: 23px; }
.ex-list { flex: 1; min-width: 0; overflow: hidden; padding: 515px 0 0 19px; }
.row { display: grid; grid-template-columns: 260px 120px 100px 90px; height: 21px; line-height: 21px; color: #6d6d6d; }
.row > span:first-child { display: flex; align-items: center; gap: 4px; color: #111; }
.row .size { padding-left: 59px; }
.ex-status { display: flex; align-items: center; height: 24px; padding: 0 4px 0 14px; color: #1e395b; flex: none; }
.ex-status span + span { margin-left: 22px; }
.view { width: 22px; height: 23px; display: grid; place-items: center; }
.view.on { background: #c5e2f6; border: 1px solid #26679c; }

/* Computer management */
.mmc { left: 303px; top: 140px; width: 1000px; height: 715px; }
.mmc .caption > .ic { margin: 6px 0 0 2px; }
.menu { display: flex; height: 24px; background: #f0f0f0; border-bottom: 1px solid #a9abb3; flex: none; }
.menu button { width: 56px; }
.tools { display: flex; align-items: center; height: 29px; padding: 0 3px 5px 1px; background: #f0f0f0; flex: none; }
.tools button { width: 24px; height: 22px; display: grid; place-items: center; }
.tools .sel { background: #e4f1fb; border: 1px solid #26a0da; }
.tools i { width: 1px; height: 21px; margin: 0 7px 0 -2px; background: #999; }
.tools span { width: 5px; }
.panes { flex: 1; min-height: 0; display: flex; gap: 3px; background: #f0f0f0; }
.tree { width: 190px; display: flex; flex-direction: column; border: 1px solid #828790; background: #fff; padding: 1px; flex: none; }
.tree ul { flex: 1; min-height: 0; overflow: hidden; }
.tree li { display: flex; align-items: center; height: 20px; gap: 3px; padding-left: 3px; white-space: nowrap; }
.tree .l1 { padding-left: 9px; }
.tree .l2 { padding-left: 28px; }
.tree .ic { margin-right: 1px; }
.tree .tw { width: 8px; height: 10px; margin-right: 2px; }
.picked { display: flex; align-items: center; gap: 3px; height: 20px; margin-left: -2px; padding: 0 4px 0 1px; border: 1px solid #d9d9d9; background: #f0f0f0; }
.tree .thumb { width: 139px; }
.mid { flex: 1; min-width: 0; display: flex; flex-direction: column; border: 1px solid; border-width: 2px 1px 1px 2px; border-color: #828282 #e8e8e8 #e8e8e8 #828282; background: #f0f0f0; }
.vols { height: 281px; overflow: hidden; background: #fff; flex: none; }
.vols table { table-layout: fixed; width: 100%; border-collapse: collapse; }
.c-vol { width: 122px; }
.c-s { width: 36px; }
.c-fs { width: 60px; }
.c-st { width: 249px; }
.c-cap { width: 64px; }
.vols th, .vols td { padding: 0 0 0 5px; text-align: left; font-weight: normal; white-space: nowrap; overflow: hidden; }
.vols th { height: 20px; background: #f0f0f0; border-right: 2px solid #828282; border-bottom: 1px solid #6d6d6d; border-top: 1px solid #fff; }
.vols th:last-child { border-right: 0; }
.vols td { height: 18px; padding-left: 7px; }
.vols td:last-child { padding-left: 6px; }
.vols td:first-child { padding-left: 2px; }
.vols td .dr { display: inline-block; vertical-align: -1px; margin-right: 2px; }
.mid .thumb { width: 66%; }
.split { height: 7px; border-bottom: 2px solid #777; border-right: 1px solid #777; border-top: 2px solid #fafafa; flex: none; }
.disks { flex: 1; min-height: 0; padding-top: 7px; }
.disk { display: flex; border-top: 1px solid #fff; }
.info { width: 114px; padding: 5px 0 0 9px; border-right: 1px solid #fff; line-height: 17px; white-space: nowrap; flex: none; }
.dname { display: flex; align-items: flex-start; gap: 8px; }
.dname strong { padding-top: 2px; }
.first .dr { margin-top: 3px; }
.disk.first { height: 112px; border-bottom: 1px solid #999; }
.disk.second { height: 110px; margin-top: 1px; }
.second .info { padding-top: 3px; border-left: 1px solid #999; border-bottom: 1px solid #fff; padding-left: 8px; }
.second .dname strong { padding-top: 3px; }
.graph { flex: 1; margin-left: 2px; }
.first .graph { padding: 3px 2px 4px 0; }
.second .graph { border-left: 1px solid #fff; border-bottom: 1px solid #999; }
.part { height: 101px; border: 1px solid #999; padding-right: 1px; }
.strip { height: 16px; background: #000080; border-bottom: 1px solid #999; }
.box { height: 79px; margin: 2px 2px 0; background: #fff; border-top: 1px solid #999; }
.legend { display: flex; align-items: center; gap: 5px; height: 21px; padding-left: 5px; border: 1px solid #999; border-width: 1px 1px 1px 0; border-top-color: #fff; flex: none; }
.legend b { width: 11px; height: 13px; background: #000; }
.legend .navy { background: #000080; }
.acts { width: 190px; margin-left: 1px; display: flex; flex-direction: column; border: 1px solid #e3e3e3; border-top: 2px solid #777; border-left: 2px solid #777; background: #fff; flex: none; }
.a-head { height: 21px; padding-left: 4px; line-height: 20px; font-weight: bold; background: #f0f0f0; border-bottom: 1px solid #999; margin-bottom: 1px; }
.a-group, .a-item { display: flex; align-items: center; justify-content: space-between; }
.a-group { height: 25px; padding: 0 8px 0 7px; font-size: 15px; line-height: 24px; background: linear-gradient(#b9d1ea, #99b4d1); }
.a-item { height: 23px; padding: 0 9px 0 31px; }
.mmc-status { display: flex; height: 23px; border: 1px solid #a0a0a0; padding: 1px; background: #fff; flex: none; }
.mmc-status span { border-right: 1px solid #d7d7d7; }
.mmc-status span:nth-child(1) { flex: 1; }
.mmc-status span:nth-child(2) { width: 133px; }
.mmc-status span:nth-child(3) { width: 85px; }

/* Drive letter dialog */
.dialog { left: 575px; top: 331px; width: 457px; height: 332px; border-color: #1c2a33; background: #66caea; }
.dialog .close { width: 34px; height: 22px; margin: -1px -2px 0 auto; display: grid; place-items: center; background: #c35a50; border: 1px solid #5a3436; }
.dlg-body { flex: 1; display: flex; flex-direction: column; padding: 16px 12px 14px; background: #f0f0f0; border-top: 1px solid #8fb9c9; }
.paths { height: 140px; margin-top: 11px; padding: 1px 5px; border: 1px solid #828790; background: #fff; }
.path-item { display: flex; align-items: center; height: 21px; }
.path-item span { height: 21px; line-height: 21px; width: 20px; padding-left: 2px; background: #3399ff; color: #fff; }
.edit-row, .ok-row { display: flex; }
.edit-row { gap: 9px; padding-left: 1px; margin-top: 16px; }
.ok-row { gap: 15px; padding-right: 6px; margin-top: 23px; justify-content: flex-end; }
.edit-row button, .ok-row button { width: 86px; height: 28px; background: #ddd; border: 1px solid #707070; }
.ok-row button { border-color: #3c7fb1; }
.pointer { position: absolute; left: 731px; top: 584px; overflow: visible; }
```
